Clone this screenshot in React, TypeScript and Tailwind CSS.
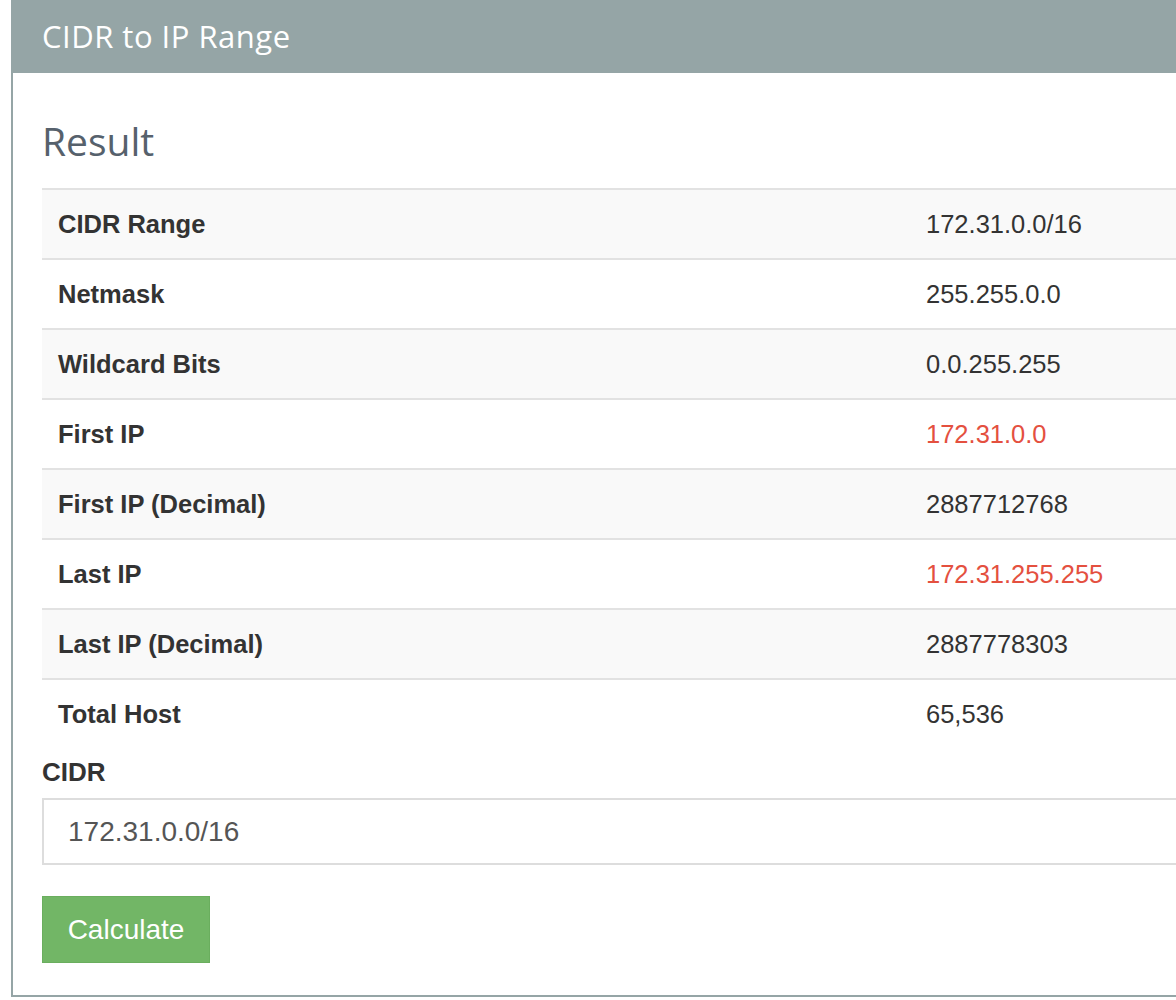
import React from "react";

const rows: { label: string; value: string; red?: boolean }[] = [
  { label: "CIDR Range", value: "172.31.0.0/16" },
  { label: "Netmask", value: "255.255.0.0" },
  { label: "Wildcard Bits", value: "0.0.255.255" },
  { label: "First IP", value: "172.31.0.0", red: true },
  { label: "First IP (Decimal)", value: "2887712768" },
  { label: "Last IP", value: "172.31.255.255", red: true },
  { label: "Last IP (Decimal)", value: "2887778303" },
  { label: "Total Host", value: "65,536" },
];

export default function App() {
  return (
    <div className="w-[1176px] h-[1000px] overflow-hidden bg-white pl-[11px]">
      <div className="w-[1240px] h-[997px] border-2 border-t-0 border-[#95a5a6] bg-white flex flex-col">
        <div
          className="h-[73px] bg-[#95a5a6] text-white flex items-center -mx-[2px] pl-[31px] text-[31px] tracking-[0.5px]"
          style={{ fontFamily: '"Open Sans", sans-serif' }}
        >
          CIDR to IP Range
        </div>
        <div className="pl-[29px] pr-[29px]" style={{ fontFamily: '"Liberation Sans", Arial, sans-serif' }}>
          <div
            className="h-[115px] flex items-center pt-[22px] text-[39px] text-[#56616c]"
            style={{ fontFamily: '"Open Sans", sans-serif' }}
          >
            Result
          </div>
          <div className="border-t-2 border-[#e2e2e2]">
            {rows.map((r, i) => (
              <div
                key={r.label}
                className={`grid grid-cols-[868px_1fr] items-center ${
                  i < rows.length - 1 ? "h-[70px] border-b-2 border-[#e2e2e2]" : "h-[68px]"
                } ${i % 2 === 0 && i !== rows.length - 1 ? "bg-[#f9f9f9]" : "bg-white"}`}
              >
                <div className="pl-[16px] text-[25.5px] font-bold text-[#333333]">{r.label}</div>
                <div className={`pl-[16px] text-[25.5px] ${r.red ? "text-[#e4503f]" : "text-[#333333]"}`}>
                  {r.value}
                </div>
              </div>
            ))}
          </div>
          <div className="text-[26px] font-bold text-[#333333] mt-[6px] h-[37px] leading-[37px]">CIDR</div>
          <div className="mt-[7px] h-[67px] border-2 border-[#dddddd] flex items-center pl-[24px] text-[28px] text-[#555555]">
            172.31.0.0/16
          </div>
          <button className="mt-[31px] w-[168px] h-[67px] bg-[#72b666] text-white text-[28px] flex items-center justify-center border border-[#6aae5e]">
            Calculate
          </button>
        </div>
      </div>
    </div>
  );
}
